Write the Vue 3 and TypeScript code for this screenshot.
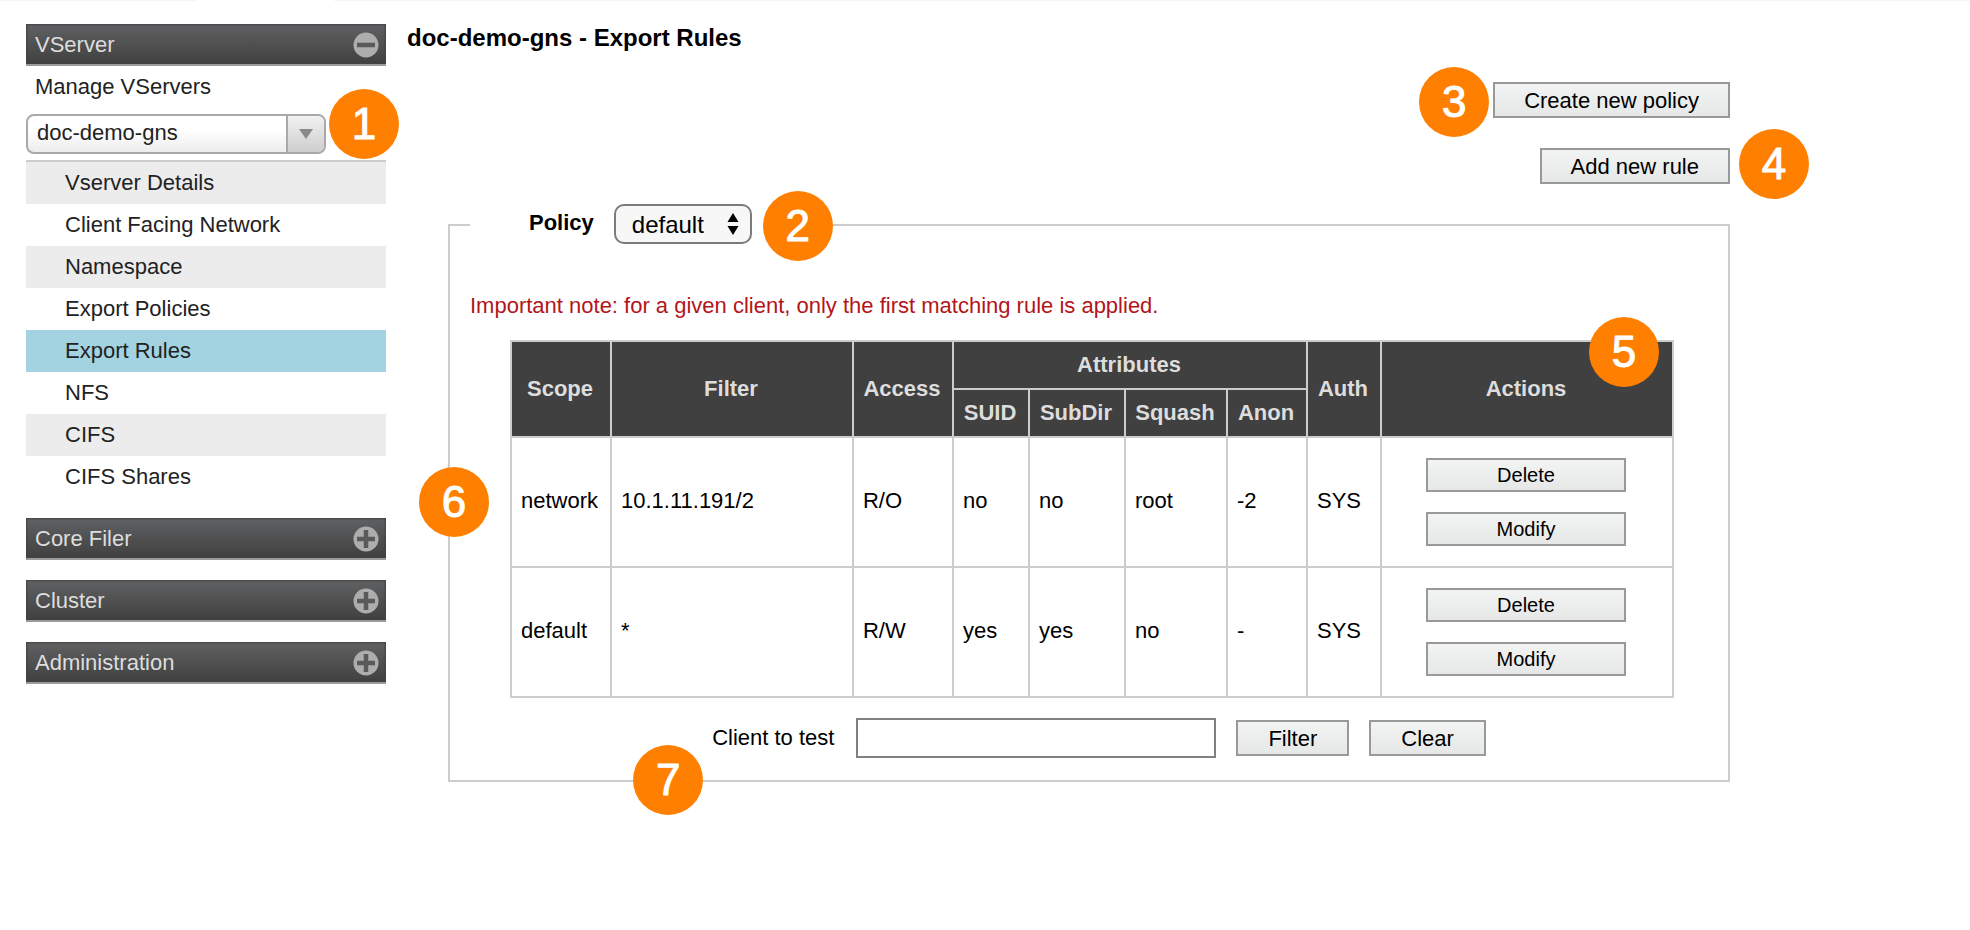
<script setup lang="ts">
import { ref } from 'vue'

interface Rule {
  scope: string
  filter: string
  access: string
  suid: string
  subdir: string
  squash: string
  anon: string
  auth: string
}

const vserver = ref('doc-demo-gns')
const policy = ref('default')
const client = ref('')
const current = 'Export Rules'

const pages: string[] = [
  'Vserver Details',
  'Client Facing Network',
  'Namespace',
  'Export Policies',
  'Export Rules',
  'NFS',
  'CIFS',
  'CIFS Shares',
]
const sections: string[] = ['Core Filer', 'Cluster', 'Administration']

const rules: Rule[] = [
  { scope: 'network', filter: '10.1.11.191/2', access: 'R/O', suid: 'no', subdir: 'no', squash: 'root', anon: '-2', auth: 'SYS' },
  { scope: 'default', filter: '*', access: 'R/W', suid: 'yes', subdir: 'yes', squash: 'no', anon: '-', auth: 'SYS' },
]
</script>

<template>
  <div class="page">
    <div class="top-line"></div>
    <div class="layout">
      <nav class="sidebar">
        <button type="button" class="section" aria-expanded="true">
          <span>VServer</span>
          <svg class="toggle" viewBox="0 0 26 26" aria-hidden="true">
            <circle cx="13" cy="13" r="12.5" />
            <path d="M4 13H22" />
          </svg>
        </button>
        <a href="#" class="manage">Manage VServers</a>
        <div class="combo">
          <select v-model="vserver" aria-label="VServer">
            <option>doc-demo-gns</option>
          </select>
          <span class="combo-arrow">
            <svg viewBox="0 0 14 10" aria-hidden="true"><path d="M0 0H14L7 10Z" /></svg>
          </span>
          <span class="badge badge-vserver">1</span>
        </div>
        <ul class="menu">
          <li v-for="page in pages" :key="page" :class="{ selected: page === current }">
            <a href="#">{{ page }}</a>
          </li>
        </ul>
        <button v-for="name in sections" :key="name" type="button" class="section closed" aria-expanded="false">
          <span>{{ name }}</span>
          <svg class="toggle" viewBox="0 0 26 26" aria-hidden="true">
            <circle cx="13" cy="13" r="12.5" />
            <path d="M4 13H22M13 4V22" />
          </svg>
        </button>
      </nav>

      <main class="content">
        <h1>doc-demo-gns - Export Rules</h1>
        <div class="tools">
          <div class="tool">
            <button type="button" class="btn">Create new policy</button>
            <span class="badge badge-create">3</span>
          </div>
          <div class="tool">
            <button type="button" class="btn">Add new rule</button>
            <span class="badge badge-add">4</span>
          </div>
        </div>

        <fieldset>
          <legend>
            <div class="policy">
              <label for="policy">Policy</label>
              <div class="policy-select">
                <select id="policy" v-model="policy">
                  <option>default</option>
                </select>
                <svg class="updown" viewBox="0 0 12 22" aria-hidden="true">
                  <path d="M6 0L11.500 9H.5ZM6 22L11.500 13H.5Z" />
                </svg>
                <span class="badge badge-policy">2</span>
              </div>
            </div>
          </legend>

          <p class="note">Important note: for a given client, only the first matching rule is applied.</p>

          <div class="rules">
            <table>
              <colgroup>
                <col class="c-scope" />
                <col />
                <col class="c-access" />
                <col class="c-suid" />
                <col class="c-subdir" />
                <col class="c-squash" />
                <col class="c-anon" />
                <col class="c-auth" />
                <col class="c-actions" />
              </colgroup>
              <thead>
                <tr>
                  <th rowspan="2">Scope</th>
                  <th rowspan="2">Filter</th>
                  <th rowspan="2">Access</th>
                  <th colspan="4">Attributes</th>
                  <th rowspan="2">Auth</th>
                  <th rowspan="2">Actions</th>
                </tr>
                <tr>
                  <th>SUID</th>
                  <th>SubDir</th>
                  <th>Squash</th>
                  <th>Anon</th>
                </tr>
              </thead>
              <tbody>
                <tr v-for="rule in rules" :key="rule.scope">
                  <td>{{ rule.scope }}</td>
                  <td>{{ rule.filter }}</td>
                  <td>{{ rule.access }}</td>
                  <td>{{ rule.suid }}</td>
                  <td>{{ rule.subdir }}</td>
                  <td>{{ rule.squash }}</td>
                  <td>{{ rule.anon }}</td>
                  <td>{{ rule.auth }}</td>
                  <td class="actions">
                    <div class="stack">
                      <button type="button" class="btn small">Delete</button>
                      <button type="button" class="btn small">Modify</button>
                    </div>
                  </td>
                </tr>
              </tbody>
            </table>
            <span class="badge badge-actions">5</span>
            <span class="badge badge-rows">6</span>
          </div>

          <form class="tester" @submit.prevent>
            <div class="tester-label">
              <label for="client">Client to test</label>
              <span class="badge badge-tester">7</span>
            </div>
            <input id="client" v-model="client" type="text" />
            <button type="submit" class="btn">Filter</button>
            <button type="reset" class="btn">Clear</button>
          </form>
        </fieldset>
      </main>
    </div>
  </div>
</template>

<style>
body {
  margin: 0;
  background: #fff;
}
</style>

<style scoped>
.page,
.page button,
.page select,
.page input {
  font-family: "Liberation Sans", Arial, Helvetica, sans-serif;
  font-size: 22px;
}

.page {
  min-height: 100vh;
  color: #000;
  line-height: 26px;
}

.page * {
  box-sizing: border-box;
}

.top-line {
  height: 1px;
  background: linear-gradient(to right, #f5f5f5 196px, #fff 196px, #fff 334px, #f5f5f5 334px);
}

.layout {
  display: flex;
  padding: 23px 240px 60px 26px;
}

.sidebar {
  flex: 0 0 360px;
}

.section {
  display: flex;
  align-items: center;
  justify-content: space-between;
  width: 100%;
  height: 42px;
  margin: 0;
  padding: 2px 7px 0 9px;
  border: 0;
  border-bottom: 2px solid #9b9b9b;
  background: linear-gradient(#606162, #404041);
  box-shadow: inset 0 0 2px 1px #434344;
  color: #ddd;
}

.section.closed {
  margin-top: 20px;
}

.toggle {
  width: 26px;
  height: 26px;
}

.toggle circle {
  fill: #adadad;
}

.toggle path {
  fill: none;
  stroke: #5a5a5b;
  stroke-width: 4.500;
}

.manage,
.menu a {
  display: block;
  line-height: 42px;
  color: #222;
  text-decoration: none;
}

.manage {
  padding-left: 9px;
}

.combo {
  position: relative;
  width: 300px;
  margin: 6px 0;
}

.combo select {
  display: block;
  width: 100%;
  height: 40px;
  padding: 0 50px 4px 9px;
  border: 2px solid #a9a9a9;
  border-radius: 8px;
  appearance: none;
  background: linear-gradient(#fff 40%, #ececec);
  color: #222;
}

.combo-arrow {
  position: absolute;
  top: 2px;
  right: 2px;
  bottom: 2px;
  display: flex;
  align-items: center;
  justify-content: center;
  width: 38px;
  border-left: 2px solid #a9a9a9;
  border-radius: 0 6px 6px 0;
  background: linear-gradient(#f2f2f2, #cdcdcd);
  pointer-events: none;
}

.combo-arrow svg {
  width: 14px;
  height: 10px;
  fill: #8a8a8a;
}

.menu {
  margin: 0;
  padding: 0;
  border-top: 2px solid #ccc;
  list-style: none;
}

.menu li {
  padding-left: 39px;
}

.menu li:nth-child(odd) {
  background: #ececec;
}

.menu li.selected {
  background: #a3d3e1;
}

.content {
  flex: 1;
  min-width: 0;
}

h1 {
  margin: 0 0 30px 21px;
  font-size: 24px;
  line-height: 28px;
}

.tools {
  display: flex;
  flex-direction: column;
  align-items: flex-end;
  gap: 30px;
}

.tool {
  position: relative;
}

.btn {
  display: block;
  height: 36px;
  margin: 0;
  padding: 2px 30px 0;
  border: 2px solid #999;
  border-radius: 0;
  background: linear-gradient(#f2f4f3, #e6e7e7);
  color: #000;
  line-height: 26px;
}

.tool .btn {
  padding: 2px 29px 0;
}

.page .btn.small {
  width: 200px;
  height: 34px;
  padding: 0;
  font-size: 20px;
}

fieldset {
  min-width: 0;
  margin: 20px 0 0 62px;
  padding: 46px 54px 22px 60px;
  border: 2px solid #ccc;
}

legend {
  margin-left: -40px;
  padding: 0 60px 2px 59px;
}

.policy {
  display: flex;
  align-items: center;
  gap: 20px;
}

.policy label {
  padding-bottom: 2px;
  font-weight: bold;
}

.policy-select {
  position: relative;
}

.policy-select select {
  display: block;
  width: 138px;
  height: 40px;
  padding: 0 30px 0 16px;
  border: 2px solid #7b7b7b;
  border-radius: 10px;
  appearance: none;
  background: #f7f7f7;
  color: #000;
  font-size: 24px;
}

.updown {
  position: absolute;
  top: 9px;
  right: 13px;
  width: 12px;
  height: 22px;
  pointer-events: none;
}

.note {
  margin: 0 0 20px -40px;
  color: #b3151b;
  line-height: 28px;
}

.rules {
  position: relative;
}

table {
  width: 100%;
  border-collapse: collapse;
  table-layout: fixed;
}

.c-scope,
.c-access {
  width: 100px;
}

.c-suid {
  width: 76px;
}

.c-subdir {
  width: 96px;
}

.c-squash {
  width: 102px;
}

.c-anon {
  width: 80px;
}

.c-auth {
  width: 74px;
}

.c-actions {
  width: 292px;
}

th,
td {
  border: 2px solid #ccc;
}

th {
  height: 48px;
  padding: 0 2px 0 0;
  background: #404040;
  color: #ddd;
}

td {
  padding: 0 8px 2px 9px;
}

td.actions {
  padding: 20px 2px 20px 0;
}

.stack {
  display: flex;
  flex-direction: column;
  align-items: center;
  gap: 20px;
}

.tester {
  display: flex;
  align-items: center;
  justify-content: center;
  gap: 20px;
  margin-top: 20px;
  padding-left: 14px;
}

.tester-label {
  position: relative;
  margin-right: 2px;
}

.tester input {
  width: 360px;
  height: 40px;
  padding: 0 8px;
  border: 2px solid #808080;
  border-radius: 0;
  background: #fff;
}

.badge {
  position: absolute;
  z-index: 1;
  width: 70px;
  height: 70px;
  border-radius: 50%;
  background: #ff8000;
  color: #fff;
  font-size: 44px;
  font-weight: normal;
  line-height: 70px;
  text-align: center;
  -webkit-text-stroke: 1px #fff;
}

.badge-vserver {
  top: -25px;
  left: 303px;
}

.badge-policy {
  top: -13px;
  left: 149px;
}

.badge-create {
  top: -15px;
  left: -74px;
}

.badge-add {
  top: -19px;
  right: -79px;
}

.badge-actions {
  top: -23px;
  right: 15px;
}

.badge-rows {
  top: 127px;
  left: -91px;
}

.badge-tester {
  top: 20px;
  left: -79px;
}
</style>
